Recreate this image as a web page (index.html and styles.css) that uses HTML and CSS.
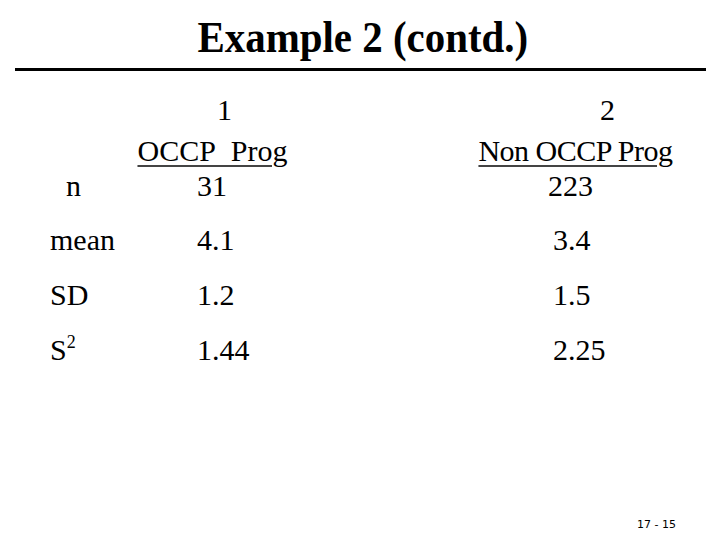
FILE: index.html
```html
<!DOCTYPE html>
<html lang="en">
<head>
    <meta charset="UTF-8">
    <title>Example 2 (contd.)</title>
    <link rel="stylesheet" href="styles.css">
</head>
<body>
    <div class="slide">
        <div class="title-bar">
            <h1 class="title">Example 2 (contd.)</h1>
        </div>

        <div class="stats">
            <div></div>
            <div class="head head-one"><span class="num">1</span></div>
            <div class="head head-two"><span class="num">2</span></div>

            <div></div>
            <div class="head head-one"><span class="name">OCCP&nbsp;&nbsp;Prog</span></div>
            <div class="head head-two"><span class="name">Non OCCP Prog</span></div>

            <div class="label label-n">n</div>
            <div class="val">31</div>
            <div class="val val-n2">223</div>

            <div class="label">mean</div>
            <div class="val">4.1</div>
            <div class="val">3.4</div>

            <div class="label">SD</div>
            <div class="val">1.2</div>
            <div class="val">1.5</div>

            <div class="label">S<sup>2</sup></div>
            <div class="val">1.44</div>
            <div class="val">2.25</div>
        </div>

        <div class="footer">17 - 15</div>
    </div>
</body>
</html>
```

FILE: styles.css
```css
* {
    margin: 0;
    padding: 0;
    box-sizing: border-box;
}

body {
    background: #fff;
    color: #000;
    font-family: 'Liberation Serif', 'Times New Roman', serif;
}

.slide {
    width: 720px;
    height: 540px;
    display: flex;
    flex-direction: column;
}

.title-bar {
    margin: 0 14px 0 15px;
    padding: 13px 0 5px;
    border-bottom: 3px solid #000;
    text-align: center;
}

.title {
    display: inline-block;
    font-size: 44px;
    line-height: 50px;
    font-weight: bold;
    transform: scaleX(0.93);
    margin-left: 4px;
}

.stats {
    margin-top: 21px;
    padding-left: 50px;
    display: grid;
    grid-template-columns: 86px 342px 1fr;
    grid-template-rows: 41px 35px 54px 55px 55px 35px;
    font-size: 30px;
    line-height: 35px;
}

.head-one {
    width: 153px;
    text-align: center;
}

.head-one .num {
    padding-left: 24px;
}

.head-two {
    width: 195px;
    text-align: center;
}

.head-two .num {
    padding-left: 64px;
}

.name {
    text-decoration: underline;
    text-decoration-thickness: 2px;
    text-decoration-color: #444;
    text-underline-offset: 4px;
}

.head-two .name {
    letter-spacing: -0.5px;
}

.label-n {
    padding-left: 16px;
}

.val {
    padding-left: 61px;
}

.stats .val:nth-child(3n) {
    padding-left: 75px;
}

.stats .val-n2:nth-child(3n) {
    padding-left: 70px;
}

sup {
    font-size: 18px;
    line-height: 0;
    vertical-align: 12px;
}

.footer {
    margin-top: auto;
    padding: 0 44px 9px 0;
    text-align: right;
    font-family: 'DejaVu Sans', sans-serif;
    font-size: 11px;
    line-height: 12px;
}
```
